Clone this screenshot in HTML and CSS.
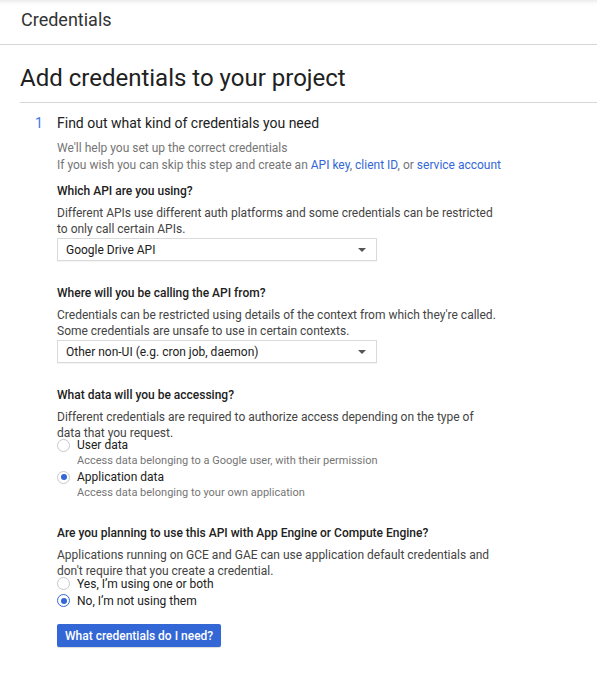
FILE: index.html
```html
<!DOCTYPE html>
<html>
<head>
<meta charset="utf-8">
<link rel="stylesheet" href="styles.css">
</head>
<body>
<header class="topbar"><span class="topbar-title">Credentials</span></header>
<main class="page">
  <h1 class="page-title">Add credentials to your project</h1>
  <section class="step">
    <div class="step-num">1</div>
    <div class="step-body">
      <h2 class="step-title">Find out what kind of credentials you need</h2>
      <p class="intro">We'll help you set up the correct credentials</p>
      <p class="intro">If you wish you can skip this step and create an <a href="#">API key</a>, <a href="#">client ID</a>, or <a href="#">service account</a></p>

      <div class="field">
        <h3 class="q">Which API are you using?</h3>
        <p class="desc">Different APIs use different auth platforms and some credentials can be restricted to only call certain APIs.</p>
        <div class="select"><span>Google Drive API</span><span class="caret"></span></div>
      </div>

      <div class="field">
        <h3 class="q">Where will you be calling the API from?</h3>
        <p class="desc">Credentials can be restricted using details of the context from which they're called. Some credentials are unsafe to use in certain contexts.</p>
        <div class="select"><span>Other non-UI (e.g. cron job, daemon)</span><span class="caret"></span></div>
      </div>

      <div class="field">
        <h3 class="q">What data will you be accessing?</h3>
        <p class="desc">Different credentials are required to authorize access depending on the type of data that you request.</p>
        <div class="radios">
          <div class="radio-row"><span class="radio"></span><span class="radio-label">User data</span></div>
          <div class="radio-sub">Access data belonging to a Google user, with their permission</div>
          <div class="radio-row"><span class="radio on"></span><span class="radio-label">Application data</span></div>
          <div class="radio-sub">Access data belonging to your own application</div>
        </div>
      </div>

      <div class="field field-gae">
        <h3 class="q">Are you planning to use this API with App Engine or Compute Engine?</h3>
        <p class="desc">Applications running on GCE and GAE can use application default credentials and don't require that you create a credential.</p>
        <div class="radios radios-gae">
          <div class="radio-row tight"><span class="radio"></span><span class="radio-label">Yes, I’m using one or both</span></div>
          <div class="radio-row tight"><span class="radio on focus"></span><span class="radio-label">No, I’m not using them</span></div>
        </div>
      </div>

      <button class="btn">What credentials do I need?</button>
    </div>
  </section>
</main>
</body>
</html>
```
FILE: styles.css
```css
* { box-sizing: border-box; }
html, body { margin: 0; padding: 0; background: #fff; }
body {
  font-family: Roboto, "Liberation Sans", Arial, sans-serif;
  color: #212121;
  width: 597px;
  height: 674px;
  overflow: hidden;
}
.topbar {
  height: 45px;
  border-bottom: 1px solid #d6d6d6;
  background: linear-gradient(#ececec 0px, #fafafa 3px, #ffffff 6px);
  display: flex;
  align-items: center;
  padding: 0 0 6px 21px;
}
.topbar-title {
  font-size: 18px;
  color: #333;
}
.page { padding-left: 20px; }
.page-title {
  margin: 0;
  font-size: 24px;
  font-weight: 400;
  color: #212121;
  height: 58px;
  padding-top: 18px;
  line-height: 30px;
  border-bottom: 1px solid #d6d6d6;
}
.step {
  display: flex;
  padding-top: 10px;
}
.step-num {
  width: 37px;
  padding-left: 15px;
  font-size: 14px;
  line-height: 20px;
  color: #3b78e7;
}
.step-body { flex: 1; }
.step-title {
  margin: 0 0 7px;
  font-size: 14px;
  font-weight: 400;
  line-height: 20px;
  color: #212121;
}
.intro {
  margin: 0;
  font-size: 12px;
  line-height: 17px;
  color: #757575;
}
.intro a { color: #3367d6; text-decoration: none; }
.field { margin-top: 9px; }
.field + .field { margin-top: 24px; }
.field.field-gae { margin-top: 24px; }
.q {
  margin: 0 0 5px;
  font-size: 12px;
  font-weight: 500;
  line-height: 17px;
  color: #212121;
}
.desc {
  margin: 0;
  font-size: 12px;
  line-height: 16px;
  color: #444;
  max-width: 440px;
}
.select {
  margin-top: 1px;
  width: 320px;
  height: 23px;
  border: 1px solid #dadada;
  box-shadow: 0 1px 1px rgba(0,0,0,0.04);
  display: flex;
  align-items: center;
  justify-content: space-between;
  padding: 0 10px 0 8px;
  font-size: 12px;
  color: #212121;
}
.caret {
  width: 0;
  height: 0;
  border-left: 4px solid transparent;
  border-right: 4px solid transparent;
  border-top: 4px solid #555;
}
.radios { margin-top: -4px; }
.radios-gae { margin-top: -4px; }
.radio-row {
  display: flex;
  align-items: center;
  height: 16px;
}
.radio-row.tight { height: 17px; }
.radio {
  width: 13px;
  height: 13px;
  border-radius: 50%;
  border: 1px solid #c8c8c8;
  margin-right: 7px;
  position: relative;
  flex: none;
  background: #fff;
}
.radio.on::after {
  content: "";
  position: absolute;
  left: 2.5px;
  top: 2.5px;
  width: 6px;
  height: 6px;
  border-radius: 50%;
  background: #3367d6;
}
.radio.focus { border-color: #3367d6; }
.radio-label {
  font-size: 12px;
  color: #212121;
}
.radio-sub {
  padding-left: 20px;
  font-size: 11px;
  line-height: 16px;
  color: #757575;
}
.btn {
  display: block;
  margin-top: 15px;
  height: 23px;
  padding: 0 8px;
  background: #3367d6;
  color: #fff;
  border: none;
  border-radius: 2px;
  font-family: Roboto, "Liberation Sans", Arial, sans-serif;
  font-size: 12px;
  font-weight: 500;
  box-shadow: 0 1px 1px rgba(0,0,0,0.15);
}
```
